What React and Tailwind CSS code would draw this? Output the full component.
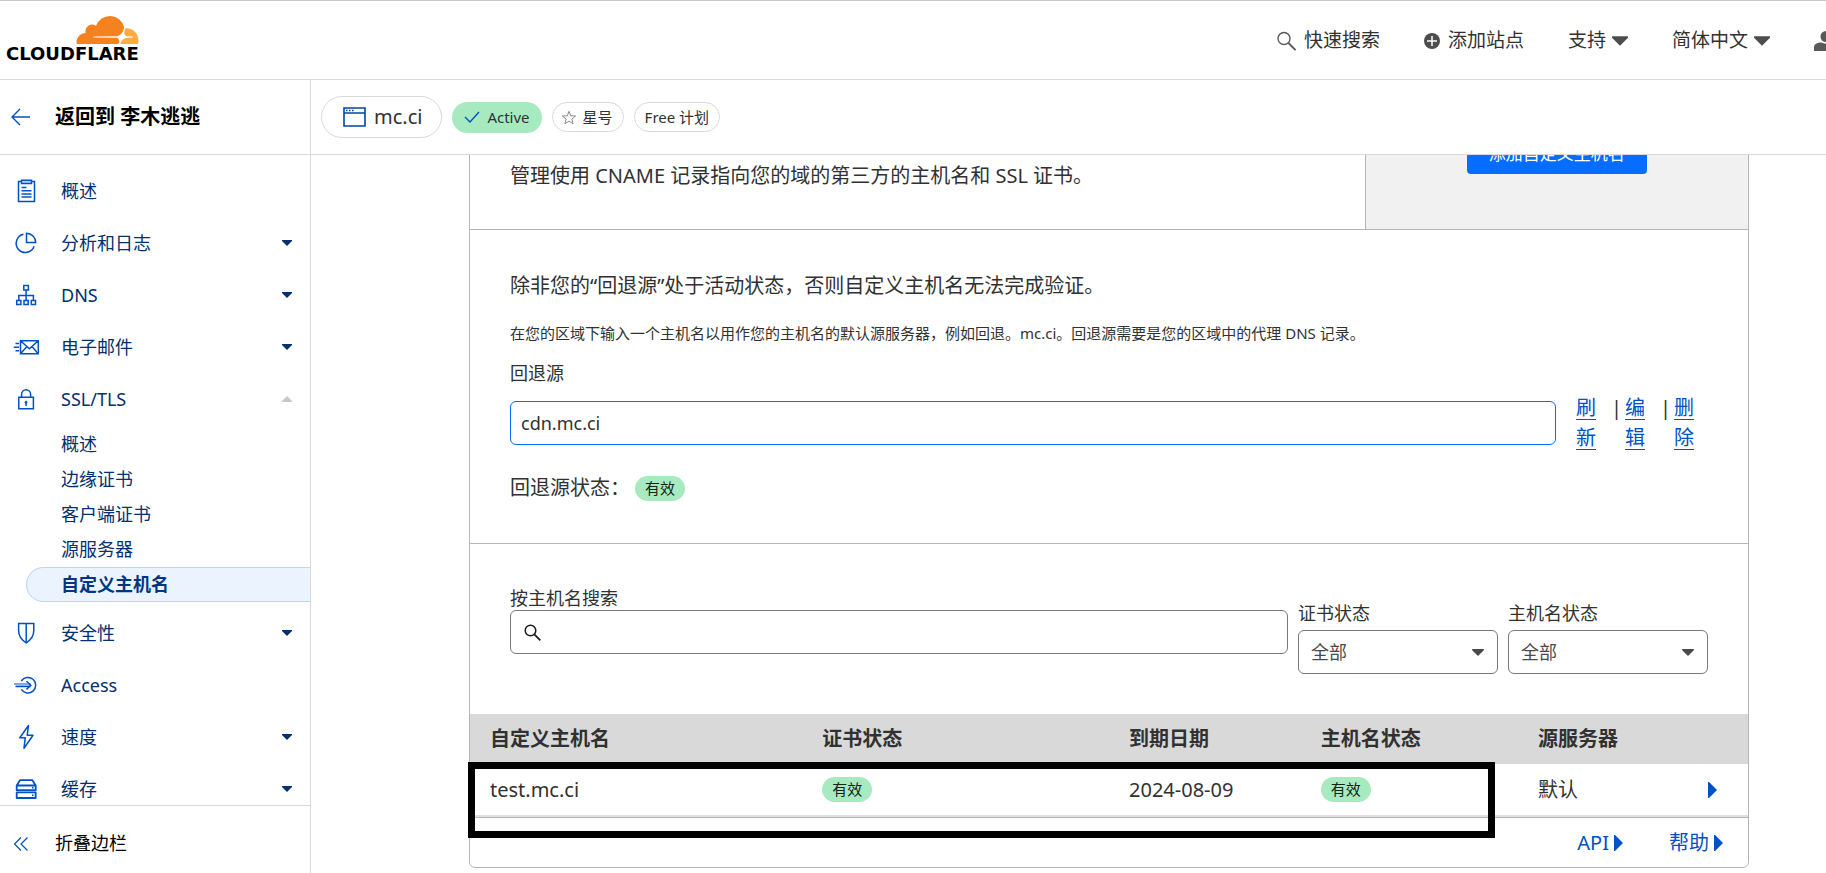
import React, { useState } from "react";

const CaretDown = ({ className }) => (
  <svg viewBox="0 0 10 6" className={className} fill="currentColor" aria-hidden="true">
    <path d="M0 0h10v1L5 6 0 1z" />
  </svg>
);

const CaretRight = () => (
  <svg viewBox="0 0 9 16" className="w-[9px] h-4 shrink-0" fill="currentColor" aria-hidden="true">
    <path d="M0 0h1l8 8-8 8H0z" />
  </svg>
);

const CloudflareLogo = () => (
  <a href="#" className="flex flex-col items-end text-black" aria-label="Cloudflare">
    <svg viewBox="0 95 640 289" className="w-[63px] h-7">
      <path
        fill="#f6821f"
        d="M407.906,319.913l-230.8-2.928a4.58,4.58,0,0,1-3.632-1.926,4.648,4.648,0,0,1-.494-4.147,6.143,6.143,0,0,1,5.361-4.076L411.281,303.9c27.631-1.26,57.546-23.574,68.022-50.784l13.286-34.542a7.944,7.944,0,0,0,.524-2.936,7.735,7.735,0,0,0-.164-1.631A151.91,151.91,0,0,0,201.257,198.4,68.12,68.12,0,0,0,94.2,269.59C41.924,271.106,0,313.728,0,366.12a96.054,96.054,0,0,0,1.029,13.958,4.508,4.508,0,0,0,4.445,3.871l426.1.051c.043,0,.08-.019.122-.02a5.606,5.606,0,0,0,5.271-4l3.273-11.265c3.9-13.4,2.448-25.8-4.1-34.9C430.124,325.423,420.09,320.487,407.906,319.913Z"
      />
      <path
        fill="#fbad41"
        d="M513.856,221.1c-2.141,0-4.271.062-6.391.164a3.771,3.771,0,0,0-3.324,2.653l-9.077,31.193c-3.9,13.4-2.449,25.786,4.1,34.89,6.02,8.4,16.054,13.323,28.238,13.9l49.2,2.939a4.491,4.491,0,0,1,3.51,1.894,4.64,4.64,0,0,1,.514,4.169,6.153,6.153,0,0,1-5.351,4.075l-51.125,2.939c-27.754,1.27-57.669,23.574-68.145,50.784l-3.695,9.606a2.716,2.716,0,0,0,2.427,3.68c.046,0,.088.017.136.017h175.91a4.69,4.69,0,0,0,4.539-3.37,124.807,124.807,0,0,0,4.682-34C640,277.3,583.524,221.1,513.856,221.1Z"
      />
    </svg>
    <span className="font-['DejaVu_Sans'] font-bold text-[18px] leading-5">CLOUDFLARE</span>
  </a>
);

const NavSvg = ({ children }) => (
  <svg
    viewBox="0 0 26 26"
    className="w-[26px] h-[26px] shrink-0"
    fill="none"
    stroke="#0051c3"
    strokeWidth="1.5"
    aria-hidden="true"
  >
    {children}
  </svg>
);

const icons = {
  overview: (
    <NavSvg>
      <path d="M8.5 3.5h-3v20h16v-20h-3" />
      <path d="M8.5 2.2h10v3.2h-10z" fill="#b9d6ff" />
      <path d="M8.5 9.5h5M8.5 12.8h10M8.5 16h10M8.5 19h10" />
    </NavSvg>
  ),
  analytics: (
    <NavSvg>
      <path d="M10.5 4.3a9.2 9.2 0 1 0 10.6 12" />
      <path d="M13.5 3.2v9.3h9.2a9.2 9.2 0 0 0-9.2-9.3z" />
    </NavSvg>
  ),
  dns: (
    <NavSvg>
      <path d="M10.8 3.5h4.6v4.6h-4.6zM3.7 18.4h4.2v4.2H3.7zM11 18.4h4.2v4.2H11zM18.3 18.4h4.2v4.2h-4.2z" />
      <path d="M13.1 8.1v10.3M5.8 18.4v-5h14.6v5" />
    </NavSvg>
  ),
  email: (
    <NavSvg>
      <path d="M7.5 6.7h17.8v13.1H7.5zM7.5 6.7l8.9 8 8.9-8M7.5 19.8l6.4-7.2M25.3 19.8l-6.4-7.2" />
      <path d="M2.5 9.6h3.6M.8 13.2h5.3M2.5 16.8h3.6" />
    </NavSvg>
  ),
  lock: (
    <NavSvg>
      <path d="M5.8 11.3h14.6v11.5H5.8z" />
      <path d="M8.6 11.3V8.2a4.5 4.5 0 0 1 9 0v3.1" />
      <path d="M13.1 16v4" />
      <circle cx="13.1" cy="16.2" r="1" fill="#0051c3" strokeWidth="1" />
    </NavSvg>
  ),
  shield: (
    <NavSvg>
      <path d="M5.6 3.6h15.2v7c0 5.5-3.2 9.6-7.6 12.2-4.4-2.6-7.6-6.7-7.6-12.2z" />
      <path d="M13.2 3.6v19" />
    </NavSvg>
  ),
  access: (
    <NavSvg>
      <path d="M8.3 9a7.8 7.8 0 1 1 0 8.4" />
      <path d="M1 12h16.5M2.5 14.6h15" strokeWidth="1.2" />
      <path d="M2 12.7h15v1.2H3z" fill="#8db5ec" stroke="none" />
      <path d="M13.5 9.2l4.3 4.1-4.3 4.1" />
    </NavSvg>
  ),
  bolt: (
    <NavSvg>
      <path d="M15.5 1.5L6.8 13.8h5.4l-1.2 10.500 9-13h-5.800z" strokeLinejoin="round" />
    </NavSvg>
  ),
  cache: (
    <NavSvg>
      <path d="M3.7 9.500l3.300-5.300h12.400L22.700 9.500v4.700h-19zM3.700 9.500h19M3.700 16.400h19v5.600h-19z" strokeWidth="1.800" strokeLinejoin="round" />
      <path d="M19 11.800h1.600M19 19.200h1.600" />
    </NavSvg>
  ),
};

const topItems = [
  { icon: "overview", label: "概述" },
  { icon: "analytics", label: "分析和日志", caret: "down" },
  { icon: "dns", label: "DNS", caret: "down" },
  { icon: "email", label: "电子邮件", caret: "down" },
  { icon: "lock", label: "SSL/TLS", caret: "up" },
];

const sslItems = ["概述", "边缘证书", "客户端证书", "源服务器", "自定义主机名"];

const bottomItems = [
  { icon: "shield", label: "安全性", caret: "down" },
  { icon: "access", label: "Access" },
  { icon: "bolt", label: "速度", caret: "down" },
  { icon: "cache", label: "缓存", caret: "down" },
];

const NavItem = ({ item }) => (
  <a href="#" className="flex items-center h-[52px] pl-[13px] pr-[18px] text-[#003070]">
    {icons[item.icon]}
    <span className="ml-[22px] flex-1">{item.label}</span>
    {item.caret === "down" && <CaretDown className="w-[10px] h-[6px]" />}
    {item.caret === "up" && <CaretDown className="w-[10px] h-[6px] rotate-180 text-[#bfc9d8]" />}
  </a>
);

const Badge = ({ children }) => (
  <span className="inline-flex items-center h-[25px] px-[10px] rounded-full bg-[#a8eac0] text-[15px] text-[#0f2417]">
    {children}
  </span>
);

const StatusSelect = ({ id, label }) => (
  <div className="w-[200px] shrink-0">
    <label htmlFor={id} className="block mb-[5px] leading-6">
      {label}
    </label>
    <div className="relative">
      <select
        id={id}
        className="block w-full h-11 pl-3 pr-8 appearance-none bg-white border border-[#797979] rounded-md text-[#4a4a4a]"
      >
        <option>全部</option>
      </select>
      <CaretDown className="absolute right-[14px] top-[19px] w-3 h-[7px] text-[#4a4a4a] pointer-events-none" />
    </div>
  </div>
);

export default function App() {
  const [fallback, setFallback] = useState("cdn.mc.ci");
  const [query, setQuery] = useState("");

  return (
    <div className="h-screen flex flex-col overflow-hidden bg-white border-t border-[#c8c8c8] text-[#313131] text-[18px] font-['Noto_Sans','Noto_Sans_CJK_SC',sans-serif]">
      {/* Top bar */}
      <header className="flex items-center justify-between h-[79px] shrink-0 pl-[6px] border-b border-[#d9d9d9]">
        <CloudflareLogo />
        <nav className="flex items-center gap-11 -mr-3 pt-px text-[19px]">
          <button className="flex items-center gap-2">
            <svg viewBox="0 0 19 20" className="w-[19px] h-5" fill="none" stroke="#595959" strokeWidth="1.4">
              <circle cx="7" cy="7.5" r="6" />
              <path d="M11.5 12l7 7" strokeWidth="1.8" />
            </svg>
            快速搜索
          </button>
          <button className="flex items-center gap-2">
            <svg viewBox="0 0 16 16" className="w-4 h-4">
              <circle cx="8" cy="8" r="8" fill="#4d4d4d" />
              <path d="M8 3v10M3 8h10" stroke="#fff" strokeWidth="1.5" />
            </svg>
            添加站点
          </button>
          <button className="flex items-center gap-[6px]">
            支持
            <CaretDown className="w-4 h-[10px] text-[#4d4d4d]" />
          </button>
          <button className="flex items-center gap-[6px]">
            简体中文
            <CaretDown className="w-4 h-[10px] text-[#4d4d4d]" />
          </button>
          <button aria-label="用户">
            <svg viewBox="0 0 24 20" className="w-6 h-5" fill="#595959">
              <circle cx="12" cy="5.5" r="5.5" />
              <path d="M0 20v-3.5C0 12.5 4 11.500 7.500 11.500 10 13 14 13 16.500 11.500 20 11.500 24 12.500 24 16.500V20z" />
            </svg>
          </button>
        </nav>
      </header>

      <div className="flex flex-1 min-h-0">
        {/* Sidebar */}
        <aside className="flex flex-col w-[311px] shrink-0 border-r border-[#d9d9d9]">
          <a
            href="#"
            className="flex items-center h-[75px] shrink-0 pl-[11px] border-b border-[#d9d9d9] text-[20px] font-bold text-black"
          >
            <svg viewBox="0 0 20 18" className="w-5 h-[18px] mr-6" fill="none" stroke="#0051c3" strokeWidth="1.4">
              <path d="M19 9H1M9 1L1 9l8 8" />
            </svg>
            返回到 李木逃逃
          </a>
          <nav className="flex-1 min-h-0 overflow-hidden pt-[10px]">
            {topItems.map((item) => (
              <NavItem key={item.label} item={item} />
            ))}
            <ul className="pt-[2px] pb-[5px]">
              {sslItems.map((label) =>
                label === "自定义主机名" ? (
                  <li key={label}>
                    <a
                      href="#"
                      className="flex items-center h-[35px] ml-[26px] pl-[34px] rounded-l-full border border-r-0 border-[#b9d6ff] bg-[#ebf3ff] font-bold text-[#003681]"
                    >
                      {label}
                    </a>
                  </li>
                ) : (
                  <li key={label}>
                    <a href="#" className="flex items-center h-[35px] pl-[61px] text-[#003070]">
                      {label}
                    </a>
                  </li>
                )
              )}
            </ul>
            {bottomItems.map((item) => (
              <NavItem key={item.label} item={item} />
            ))}
          </nav>
          <button className="flex items-center h-[68px] shrink-0 pl-[13px] pt-2 border-t border-[#d9d9d9] text-black">
            <svg viewBox="0 0 16 14" className="w-4 h-[14px] mr-[26px]" fill="none" stroke="#0051c3" strokeWidth="1.2">
              <path d="M8 .5L1.500 7 8 13.500M14.500 .5L8 7l6.500 6.500" />
            </svg>
            折叠边栏
          </button>
        </aside>

        <div className="flex flex-col flex-1 min-w-0">
          {/* Zone bar */}
          <div className="flex items-center gap-[10px] h-[75px] shrink-0 pl-[10px] border-b border-[#d9d9d9] text-[15px]">
            <button className="flex items-center h-[42px] pl-[21px] pr-[19px] gap-2 border border-[#d9d9d9] rounded-full text-[20px]">
              <svg viewBox="0 0 23 20" className="w-[23px] h-5" fill="none" stroke="#0045a6" strokeWidth="1.6">
                <path d="M1 1h21v18H1zM1 6h21" />
                <path d="M3 3.5h1.5M6 3.5h1.5M9 3.5h1.5" strokeWidth="1.4" />
              </svg>
              mc.ci
            </button>
            <span className="flex items-center gap-[7px] h-[31px] px-3 rounded-full bg-[#a8eac0]">
              <svg viewBox="0 0 16 12" className="w-4 h-3" fill="none" stroke="#0051c3" strokeWidth="1.4">
                <path d="M1 6l5 5 9-10" />
              </svg>
              Active
            </span>
            <button className="flex items-center gap-[6px] h-[30px] pl-2 pr-[10px] border border-[#d9d9d9] rounded-full">
              <svg viewBox="0 0 16 15" className="w-4 h-[15px]" fill="none" stroke="#8c8c8c" strokeWidth="1">
                <path d="M8 1.200l1.700 4.600 5 .2-3.900 3 1.300 4.800L8 11.100l-4.100 2.700L5.200 9 1.300 6l5-.2z" />
              </svg>
              星号
            </button>
            <span className="flex items-center h-[30px] px-[10px] border border-[#d9d9d9] rounded-full">Free 计划</span>
          </div>

          <main className="flex-1 min-h-0 overflow-hidden pl-[158px] pr-[77px]">
            <div className="-mt-10 border border-[#b6b6b6] rounded-md">
              <div className="flex h-[114px] border-b border-[#b6b6b6] text-[20px]">
                <p className="flex-1 flex items-end pl-10 pb-[38px] leading-[30px]">
                  管理使用 CNAME 记录指向您的域的第三方的主机名和 SSL 证书。
                </p>
                <div className="w-[30%] flex items-end justify-center pb-[55px] bg-[#f1f1f1] border-l border-[#b6b6b6]">
                  <button className="h-10 w-[180px] rounded bg-[#056dff] text-white text-[17px]">添加自定义主机名</button>
                </div>
              </div>

              {/* Fallback origin */}
              <section className="px-10 pt-[41px] pb-10 border-b border-[#b6b6b6]">
                <p className="text-[20px] leading-[30px]">除非您的“回退源”处于活动状态，否则自定义主机名无法完成验证。</p>
                <p className="mt-5 text-[15px] leading-6">
                  在您的区域下输入一个主机名以用作您的主机名的默认源服务器，例如回退。mc.ci。回退源需要是您的区域中的代理 DNS 记录。
                </p>
                <label htmlFor="fallback" className="block mt-4 leading-6">
                  回退源
                </label>
                <div className="flex items-start mt-2">
                  <input
                    id="fallback"
                    value={fallback}
                    onChange={(e) => setFallback(e.target.value)}
                    className="flex-1 min-w-0 h-11 mt-2 px-[10px] border border-[#056dff] rounded-md"
                  />
                  <div className="flex w-[152px] pl-5 text-[20px] leading-[30px]">
                    <a href="#" className="w-5 break-all text-[#0051c3] underline underline-offset-4 decoration-1">
                      刷新
                    </a>
                    <span className="ml-[15px] mr-[3px]">|</span>
                    <a href="#" className="w-5 break-all text-[#0051c3] underline underline-offset-4 decoration-1">
                      编辑
                    </a>
                    <span className="ml-[15px] mr-[3px]">|</span>
                    <a href="#" className="w-5 break-all text-[#0051c3] underline underline-offset-4 decoration-1">
                      删除
                    </a>
                  </div>
                </div>
                <div className="flex items-center gap-[5px] mt-5 text-[20px] leading-[30px]">
                  回退源状态：
                  <Badge>有效</Badge>
                </div>
              </section>

              {/* Filters */}
              <section className="flex items-end gap-[10px] px-10 pt-[42px] pb-10">
                <div className="flex-1 pb-5">
                  <label htmlFor="search" className="block leading-6">
                    按主机名搜索
                  </label>
                  <div className="flex items-center h-11 pl-[13px] border border-[#797979] rounded-md">
                    <svg viewBox="0 0 17 17" className="w-[17px] h-[17px]" fill="none" stroke="#1a1a1a" strokeWidth="1.5">
                      <circle cx="6.5" cy="6.5" r="5.3" />
                      <path d="M10.3 10.3l6 6" strokeWidth="1.8" />
                    </svg>
                    <input
                      id="search"
                      value={query}
                      onChange={(e) => setQuery(e.target.value)}
                      className="flex-1 h-full px-2 outline-none"
                    />
                  </div>
                </div>
                <StatusSelect id="cert-status" label="证书状态" />
                <StatusSelect id="host-status" label="主机名状态" />
              </section>

              <div className="relative">
                <table className="w-full table-fixed text-left text-[20px]">
                  <thead>
                    <tr className="h-[50px] bg-[#d9d9d9]">
                      <th className="w-[26%] pl-5">自定义主机名</th>
                      <th className="w-[24%] pl-5">证书状态</th>
                      <th className="w-[15%] pl-5">到期日期</th>
                      <th className="w-[17%] pl-5">主机名状态</th>
                      <th className="w-[13%] pl-5">源服务器</th>
                      <th className="w-[5%]"></th>
                    </tr>
                  </thead>
                  <tbody>
                    <tr className="h-[52px] border-b-2 border-[#e0e0e0]">
                      <td className="pl-5">test.mc.ci</td>
                      <td className="pl-5">
                        <div className="flex">
                          <Badge>有效</Badge>
                        </div>
                      </td>
                      <td className="pl-5">2024-08-09</td>
                      <td className="pl-5">
                        <div className="flex">
                          <Badge>有效</Badge>
                        </div>
                      </td>
                      <td className="pl-5">默认</td>
                      <td className="pl-6">
                        <button className="flex text-[#0051c3]" aria-label="展开">
                          <CaretRight />
                        </button>
                      </td>
                    </tr>
                  </tbody>
                </table>
                {/* Highlight around the new hostname */}
                <div className="absolute -left-[2px] right-[253px] top-12 h-[76px] border-[7px] border-black pointer-events-none"></div>
              </div>

              <footer className="flex items-center justify-end gap-[46px] h-[50px] pr-[25px] border-t border-[#b6b6b6] text-[20px] text-[#0051c3]">
                <a href="#" className="flex items-center gap-[5px]">
                  API
                  <CaretRight />
                </a>
                <a href="#" className="flex items-center gap-[5px]">
                  帮助
                  <CaretRight />
                </a>
              </footer>
            </div>
          </main>
        </div>
      </div>
    </div>
  );
}
